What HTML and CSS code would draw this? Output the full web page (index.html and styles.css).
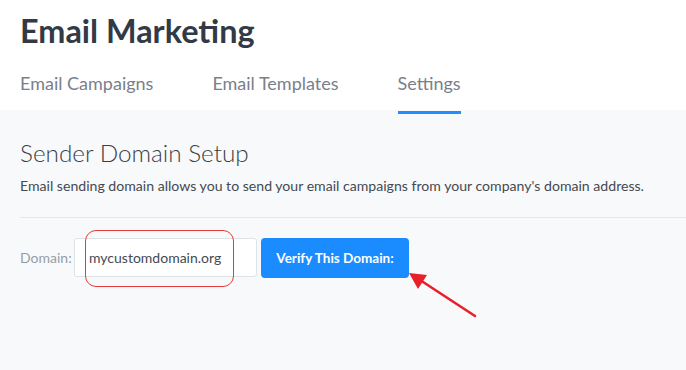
FILE: index.html
```html
<!DOCTYPE html>
<html lang="en">
  <head>
    <meta charset="UTF-8" />
    <meta name="viewport" content="width=device-width, initial-scale=1.0" />
    <title>Email Marketing</title>
    <link rel="stylesheet" href="styles.css">
  </head>
  <body>
    <div class="header">
      <h1 class="title">Email Marketing</h1>
      <div class="tabs">
        <a class="tab" href="#">Email Campaigns</a>
        <a class="tab" href="#">Email Templates</a>
        <a class="tab active" href="#">Settings</a>
      </div>
    </div>
    <div class="content">
      <h2 class="section-title">Sender Domain Setup</h2>
      <p class="desc">Email sending domain allows you to send your email campaigns from your company's domain address.</p>
      <div class="divider"></div>
      <div class="domain-row">
        <label class="label">Domain:</label>
        <div class="input-box">
          <span class="input-text">mycustomdomain.org</span>
          <!-- 红框标注 -->
          <div class="mark"></div>
        </div>
        <button class="verify">Verify This Domain:</button>
      </div>
    </div>
    <!-- 箭头标注 -->
    <svg class="arrow" width="686" height="370" viewBox="0 0 686 370">
      <line x1="475" y1="316" x2="420" y2="280" stroke="#e8202a" stroke-width="2.6" stroke-linecap="round" />
      <polygon points="409,273 427,275 418,289" fill="#e8202a" />
    </svg>
  </body>
</html>
```

FILE: styles.css
```css
* {
  box-sizing: border-box;
}
body {
  margin: 0;
  background-color: #f8f9fb;
  font-family: Lato, "Open Sans", sans-serif;
  position: relative;
  height: 370px;
  overflow: hidden;
}
.header {
  background-color: white;
  padding: 0 20px;
  height: 110px;
}
.title {
  margin: 0;
  padding-top: 11px;
  font-size: 32.4px;
  font-weight: 700;
  color: #323a46;
  line-height: 40px;
}
.tabs {
  display: flex;
  gap: 59px;
  margin-top: 20px;
}
.tab {
  text-decoration: none;
  color: #7a808a;
  font-size: 18px;
  line-height: 24px;
  padding-bottom: 16px;
  border-bottom: 3px solid transparent;
}
.tab.active {
  border-bottom-color: #1e90ff;
}
.content {
  padding: 29px 0 0 20px;
}
.section-title {
  margin: 0;
  font-size: 24.3px;
  font-weight: 300;
  color: #3a3f47;
  line-height: 28px;
}
.desc {
  margin: 10px 0 0;
  font-size: 14.1px;
  color: #444a52;
  line-height: 18px;
}
.divider {
  height: 1px;
  background-color: #e4e6ea;
  margin-top: 22px;
}
.domain-row {
  display: flex;
  align-items: flex-start;
  margin-top: 20px;
}
.label {
  color: #979da5;
  font-size: 14px;
  width: 54px;
  line-height: 39px;
}
.input-box {
  position: relative;
  width: 183px;
  height: 39px;
  background-color: white;
  border: 1px solid #dfe2e6;
  border-radius: 3px;
  padding-left: 14px;
  display: flex;
  align-items: center;
}
.input-text {
  font-size: 14px;
  color: #454a51;
}
.mark {
  position: absolute;
  left: 10px;
  top: -9px;
  width: 149px;
  height: 57px;
  border: 1.5px solid #e63b3b;
  border-radius: 11px;
}
.verify {
  margin-left: 4px;
  width: 148px;
  height: 40px;
  border: none;
  border-radius: 4px;
  background-color: #1a8cff;
  color: white;
  font-family: Lato, sans-serif;
  font-size: 13.5px;
  font-weight: 700;
}
.arrow {
  position: absolute;
  left: 0;
  top: 0;
  pointer-events: none;
}
```
